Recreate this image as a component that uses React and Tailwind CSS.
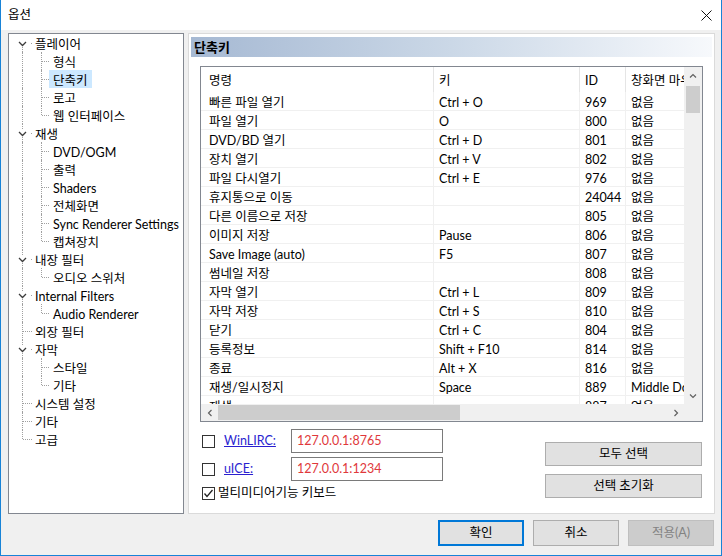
import React from 'react'

const tree = [
  { t: '플레이어', l: 0, exp: true, first: true },
  { t: '형식', l: 1 },
  { t: '단축키', l: 1, sel: true },
  { t: '로고', l: 1 },
  { t: '웹 인터페이스', l: 1, last: true },
  { t: '재생', l: 0, exp: true },
  { t: 'DVD/OGM', l: 1 },
  { t: '출력', l: 1 },
  { t: 'Shaders', l: 1 },
  { t: '전체화면', l: 1 },
  { t: 'Sync Renderer Settings', l: 1 },
  { t: '캡쳐장치', l: 1, last: true },
  { t: '내장 필터', l: 0, exp: true },
  { t: '오디오 스위처', l: 1, last: true },
  { t: 'Internal Filters', l: 0, exp: true },
  { t: 'Audio Renderer', l: 1, last: true },
  { t: '외장 필터', l: 0 },
  { t: '자막', l: 0, exp: true },
  { t: '스타일', l: 1 },
  { t: '기타', l: 1, last: true },
  { t: '시스템 설정', l: 0 },
  { t: '기타', l: 0 },
  { t: '고급', l: 0, end: true },
]

const rows = [
  ['빠른 파일 열기', 'Ctrl + O', '969', '없음'],
  ['파일 열기', 'O', '800', '없음'],
  ['DVD/BD 열기', 'Ctrl + D', '801', '없음'],
  ['장치 열기', 'Ctrl + V', '802', '없음'],
  ['파일 다시열기', 'Ctrl + E', '976', '없음'],
  ['휴지통으로 이동', '', '24044', '없음'],
  ['다른 이름으로 저장', '', '805', '없음'],
  ['이미지 저장', 'Pause', '806', '없음'],
  ['Save Image (auto)', 'F5', '807', '없음'],
  ['썸네일 저장', '', '808', '없음'],
  ['자막 열기', 'Ctrl + L', '809', '없음'],
  ['자막 저장', 'Ctrl + S', '810', '없음'],
  ['닫기', 'Ctrl + C', '804', '없음'],
  ['등록정보', 'Shift + F10', '814', '없음'],
  ['종료', 'Alt + X', '816', '없음'],
  ['재생/일시정지', 'Space', '889', 'Middle Down'],
  ['재생', '', '887', '없음'],
]

// dotted connector pieces
const VLine = ({ left, top, h }) => (
  <div
    className="absolute border-l border-dotted border-[#a0a0a0]"
    style={{ left, top, height: h }}
  />
)
const HLine = ({ left, w }) => (
  <div
    className="absolute top-[9px] border-t border-dotted border-[#a0a0a0]"
    style={{ left, width: w }}
  />
)

function TreeRow({ item }) {
  const lines = []
  if (item.l === 0) {
    if (item.exp) {
      if (!item.first) lines.push(<VLine key="a" left={13} top={0} h={5} />)
      lines.push(<VLine key="b" left={13} top={13} h={5} />)
      lines.push(<HLine key="c" left={22} w={1} />)
    } else {
      lines.push(<VLine key="a" left={13} top={0} h={item.end ? 9 : 18} />)
      lines.push(<HLine key="c" left={14} w={9} />)
    }
  } else {
    lines.push(<VLine key="a" left={13} top={0} h={18} />)
    lines.push(<VLine key="b" left={32} top={0} h={item.last ? 9 : 18} />)
    lines.push(<HLine key="c" left={33} w={7} />)
  }
  return (
    <div className={`relative h-[18px] flex ${item.l === 0 ? 'pl-[22px]' : 'pl-[40px]'}`}>
      {lines}
      {item.exp && (
        <svg className="absolute left-[9px] top-[7px]" width="9" height="6" viewBox="0 0 9 6">
          <path d="M1 1 L4.5 4.5 L8 1" fill="none" stroke="#3c3c3c" strokeWidth="1.3" />
        </svg>
      )}
      <span
        className={`h-full flex items-center pt-[4px] px-[4px] whitespace-nowrap ${
          item.sel ? 'bg-[#cce8ff]' : ''
        }`}
      >
        {item.t}
      </span>
    </div>
  )
}

const Arrow = ({ d, className }) => (
  <svg className={className} width="8" height="8" viewBox="0 0 8 8">
    <path d={d} fill="none" stroke="#606060" strokeWidth="1.2" />
  </svg>
)

function Checkbox({ checked }) {
  return (
    <div className="w-[13px] h-[13px] border border-[#333333] bg-white flex items-center justify-center shrink-0">
      {checked && (
        <svg width="11" height="11" viewBox="0 0 11 11">
          <path d="M1.5 5.5 L4 8.5 L9.5 2" fill="none" stroke="#222222" strokeWidth="1.3" />
        </svg>
      )}
    </div>
  )
}

function ShortcutTable() {
  return (
    <div className="w-[503px] h-[356px] border border-[#828790] bg-white grid grid-cols-[483px_18px] grid-rows-[337px_17px]">
      {/* list content */}
      <div className="overflow-hidden">
        <div className="w-[645px]">
          <div className="flex h-[25px] items-center">
            <div className="w-[233px] pl-[8px] pt-[4px] h-full flex items-center border-r border-[#e5e5e5]">명령</div>
            <div className="w-[146px] pl-[5px] pt-[4px] h-full flex items-center border-r border-[#e5e5e5]">키</div>
            <div className="w-[46px] pl-[5px] pt-[4px] h-full flex items-center border-r border-[#e5e5e5]">ID</div>
            <div className="w-[220px] pl-[5px] pt-[4px] h-full flex items-center whitespace-nowrap">창화면 마우스</div>
          </div>
          {rows.map((r, i) => (
            <div key={i} className="flex h-[19px] border-b border-[#f0f0f0]">
              <div className="w-[233px] pl-[8px] pt-[4px] flex items-center border-r border-[#f0f0f0] whitespace-nowrap">{r[0]}</div>
              <div className="w-[146px] pl-[5px] pt-[4px] flex items-center border-r border-[#f0f0f0]">{r[1]}</div>
              <div className="w-[46px] pl-[5px] pt-[4px] flex items-center border-r border-[#f0f0f0]">{r[2]}</div>
              <div className="w-[220px] pl-[5px] pt-[4px] flex items-center whitespace-nowrap">{r[3]}</div>
            </div>
          ))}
        </div>
      </div>
      {/* vertical scrollbar */}
      <div className="bg-[#f0f0f0] flex flex-col items-center">
        <div className="h-[17px] flex items-center justify-center">
          <Arrow d="M1 5.5 L4 2.5 L7 5.5" />
        </div>
        <div className="flex-1 w-full px-[2px] pt-[2px]">
          <div className="h-[27px] bg-[#cdcdcd]" />
        </div>
        <div className="h-[17px] flex items-center justify-center">
          <Arrow d="M1 2.5 L4 5.5 L7 2.5" />
        </div>
      </div>
      {/* horizontal scrollbar */}
      <div className="bg-[#f0f0f0] flex items-center">
        <div className="w-[17px] h-full flex items-center justify-center">
          <Arrow d="M5.5 1 L2.5 4 L5.5 7" />
        </div>
        <div className="flex-1 h-full py-[1px]">
          <div className="w-[242px] h-full bg-[#cdcdcd]" />
        </div>
        <div className="w-[17px] h-full flex items-center justify-center">
          <Arrow d="M2.5 1 L5.5 4 L2.5 7" />
        </div>
      </div>
      <div className="bg-[#f0f0f0]" />
    </div>
  )
}

function Button({ children, className = '' }) {
  return (
    <div className={`h-[24px] flex items-center justify-center border border-[#adadad] bg-[#e1e1e1] ${className}`}>
      {children}
    </div>
  )
}

export default function App() {
  return (
    <div className="w-[722px] h-[556px] flex flex-col border-x border-b border-[#1883d7] bg-[#f0f0f0] text-[12.5px] leading-none text-black font-['Lato','Noto_Sans_CJK_KR',sans-serif] overflow-hidden">
      {/* title bar */}
      <div className="h-[30px] shrink-0 bg-white flex items-center justify-between pl-[7px] pr-[9px]">
        <span>옵션</span>
        <svg width="11" height="11" viewBox="0 0 11 11">
          <path d="M0.5 0.5 L10.5 10.5 M10.5 0.5 L0.5 10.5" stroke="#111111" strokeWidth="1" />
        </svg>
      </div>

      <div className="flex gap-[4px] pl-[7px] pt-[3px] h-[484px] shrink-0">
        {/* tree */}
        <div className="w-[176px] h-[481px] border border-[#828790] bg-white overflow-hidden">
          {tree.map((item, i) => (
            <TreeRow key={i} item={item} />
          ))}
        </div>

        {/* page */}
        <div className="w-[527px] h-[481px] border border-[#dadada] bg-white flex flex-col">
          <div className="mx-[2px] mt-[3px] h-[20px] flex items-center pl-[3px] font-bold text-[13px] bg-linear-to-r from-[#a6b9d3] via-[#cbd8e7] to-[#f7f9fc]">
            단축키
          </div>
          <div className="pl-[11px] pt-[9px]">
            <ShortcutTable />
            <div className="w-[503px] flex justify-between mt-[7px]">
              <div className="flex flex-col">
                <div className="h-[24px] flex items-center">
                  <div className="ml-[2px]"><Checkbox /></div>
                  <div className="w-[76px] pl-[9px] text-[#2a1fd0] underline">WinLIRC:</div>
                  <div className="w-[152px] h-[24px] border border-[#7a7a7a] bg-white flex items-center pl-[5px] text-[#e0383b]">127.0.0.1:8765</div>
                </div>
                <div className="h-[24px] mt-[4px] flex items-center">
                  <div className="ml-[2px]"><Checkbox /></div>
                  <div className="w-[76px] pl-[9px] text-[#2a1fd0] underline">uICE:</div>
                  <div className="w-[152px] h-[24px] border border-[#7a7a7a] bg-white flex items-center pl-[5px] text-[#e0383b]">127.0.0.1:1234</div>
                </div>
                <div className="h-[16px] mt-[4px] flex items-center">
                  <div className="ml-[2px]"><Checkbox checked /></div>
                  <span className="pl-[3px]">멀티미디어기능 키보드</span>
                </div>
              </div>
              <div className="flex flex-col gap-[8px] pt-[13px] pr-[1px]">
                <Button className="w-[157px]">모두 선택</Button>
                <Button className="w-[157px]">선택 초기화</Button>
              </div>
            </div>
          </div>
        </div>
      </div>

      {/* dialog buttons */}
      <div className="flex justify-end gap-[9px] pr-[7px] pt-[6px]">
        <div className="w-[86px] h-[26px] flex items-center justify-center border-2 border-[#0078d7] bg-[#e1e1e1]">확인</div>
        <div className="w-[86px] h-[26px] flex items-center justify-center border border-[#adadad] bg-[#e1e1e1]">취소</div>
        <div className="w-[86px] h-[26px] flex items-center justify-center border border-[#bfbfbf] bg-[#cccccc] text-[#838383]">적용(A)</div>
      </div>
    </div>
  )
}
